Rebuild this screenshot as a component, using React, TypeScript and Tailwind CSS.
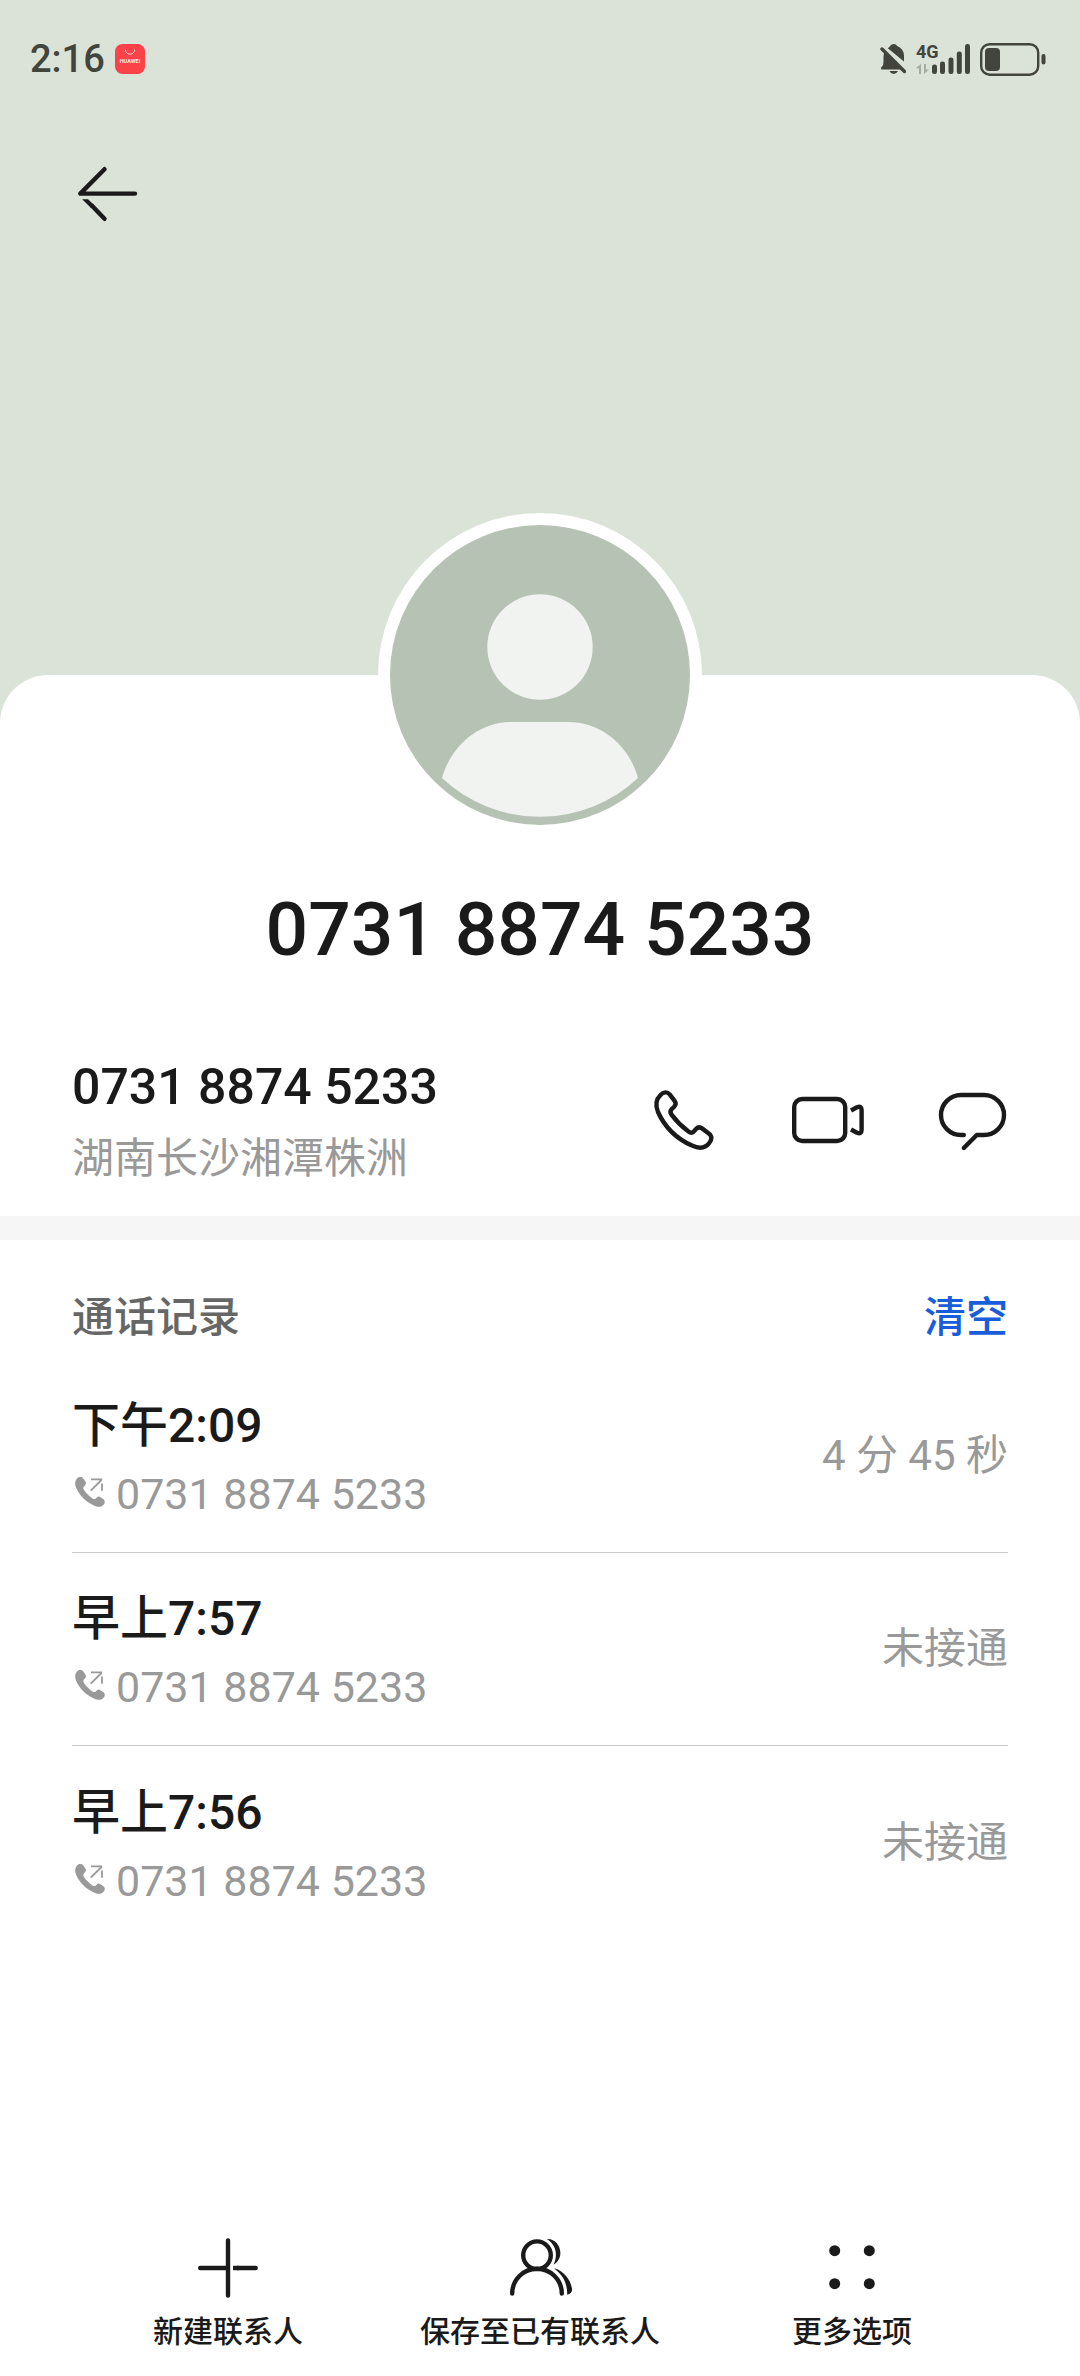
import type { ReactNode } from "react";

interface CallRecord {
  id: number;
  time: string;
  number: string;
  result: string;
}

const PHONE_NUMBER = "0731 8874 5233";

const CALLS: CallRecord[] = [
  { id: 1, time: "下午2:09", number: PHONE_NUMBER, result: "4 分 45 秒" },
  { id: 2, time: "早上7:57", number: PHONE_NUMBER, result: "未接通" },
  { id: 3, time: "早上7:56", number: PHONE_NUMBER, result: "未接通" },
];

interface IconProps {
  children: ReactNode;
}

// 72px line icon shared by the toolbar, contact actions and bottom bar
const LineIcon = ({ children }: IconProps) => (
  <svg
    viewBox="0 0 72 72"
    className="size-18"
    fill="none"
    stroke="currentColor"
    strokeWidth="4.4"
    strokeLinecap="round"
    strokeLinejoin="round"
    aria-hidden="true"
  >
    {children}
  </svg>
);

const BackIcon = () => (
  <LineIcon>
    <path d="M32.5 11.2L8.3 35.6H63" />
    <path d="M20 47.8L32.5 60.8" />
    <path d="M10.2 41.2H16L22 47L19 50Z" fill="currentColor" stroke="none" />
  </LineIcon>
);

const PhoneIcon = () => (
  <LineIcon>
    <path d="M12.5 11C15.5 7.6 19.3 7.6 21.7 10.4L26.6 16.8C28.2 19 28 20.9 26 23L23.6 25.2C22.1 26.7 22.2 28.7 23.5 30.6C28.5 37.3 33.5 42.3 40.5 47.6C42.4 49 44.3 49 45.8 47.4L48 45C49.8 43.1 52.2 43 54.4 44.6L60.8 49.4C64.2 52 64.2 55.8 61 59.4C57 64.4 51 64.8 44 61.6C28 54.5 16.5 42.5 10 28C7.5 22 8 15.5 12.5 11Z" />
  </LineIcon>
);

const VideoIcon = () => (
  <LineIcon>
    <rect x="2.2" y="15" width="51" height="42" rx="8" />
    <path d="M59 26.5L65 23.3Q69.6 21.5 69.6 26V46Q69.6 50.5 65 48.7L59 45.5" strokeLinecap="butt" />
  </LineIcon>
);

const MessageIcon = () => (
  <LineIcon>
    <path d="M27.8 51H25A20 20 0 0 1 25 11H48A20 20 0 0 1 48 51H40.8L27.8 64" />
  </LineIcon>
);

const PlusIcon = () => (
  <LineIcon>
    <path d="M36 8.5V63.5M8.2 36H35M63.7 36H45" />
    <path d="M47 36H41" strokeLinecap="butt" />
  </LineIcon>
);

const ContactsIcon = () => (
  <LineIcon>
    <circle cx="33" cy="23.2" r="13.8" />
    <path d="M8.2 61.5A24.8 24.8 0 0 1 57.8 61.5" />
    <path
      d="M43 7C51 6.600 56.500 13.500 56.400 21.300C56.200 26.500 53.500 30.500 49.600 32.600C51.600 28.500 52.200 24.500 51.800 20.500C51.200 14.500 47.500 10 43 7Z"
      fill="currentColor"
      stroke="none"
    />
    <path
      d="M50 36.300C60 38.500 67.500 49 68.100 58Q67.800 61.500 63.200 62.700C63.400 52 59.500 43.500 50 36.300Z"
      fill="currentColor"
      stroke="none"
    />
  </LineIcon>
);

const MoreIcon = () => (
  <LineIcon>
    <g fill="currentColor" stroke="none">
      <circle cx="18.7" cy="18.7" r="5.5" />
      <circle cx="53.3" cy="18.7" r="5.5" />
      <circle cx="18.7" cy="51.7" r="5.5" />
      <circle cx="53.3" cy="51.7" r="5.5" />
    </g>
  </LineIcon>
);

const OutgoingIcon = () => (
  <svg viewBox="0 0 36 36" className="mb-1 size-9" fill="currentColor" aria-hidden="true">
    <path d="M5 4.5C7 2.6 9.8 2.6 11.3 4.5L13.4 7.6C14.4 9.3 14 10.5 12.6 11.8C11 13.2 11 14.4 12 16C14.3 19.4 17 22.1 20.3 24.4C21.9 25.5 23 25.3 24.3 23.9C25.6 22.5 27 22.2 28.6 23.2L31.4 25.2C33.3 26.8 33.3 29.2 31.4 31C29 33.6 25.5 33 21.5 31.2C13.5 27.6 7.5 21.4 4.2 14C2.6 10.2 2.8 6.8 5 4.5Z" />
    <path d="M19 5.3H30.2M18.7 16.6L29.5 6M30 9.5V16.8" fill="none" stroke="currentColor" strokeWidth="1.8" />
  </svg>
);

const StatusBar = () => (
  <div className="flex h-[118px] items-center justify-between pr-[34px] pl-[30px] text-[#41453d]">
    <div className="flex items-center gap-2.5">
      <span className="text-[38px] leading-10 font-medium">2:16</span>
      <svg viewBox="0 0 30 30" className="size-[30px]" role="img" aria-label="HUAWEI">
        <rect width="30" height="30" rx="7.5" fill="#fb4248" />
        <path d="M10.3 5.5A4.7 4.7 0 0 0 19.7 5.5" fill="none" stroke="#ffd5d3" strokeWidth="1" />
        <text x="15" y="19" textAnchor="middle" fontSize="5.5" fontWeight="700" fill="#ffe9e6">
          HUAWEI
        </text>
      </svg>
    </div>
    <div className="flex items-center gap-2.5">
      <svg viewBox="0 0 26 30" className="h-[30px] w-[26px]" fill="currentColor" aria-hidden="true">
        <path d="M9.5 2.8Q11 0 13.5 0T17.3 2Q24 5 24 12V17.5L7.8 4.2Z" />
        <path d="M4.2 8.5L21.5 25.5H1.5Q0 24 2 22.5Q3.5 21 3.5 18V12Z" />
        <path d="M2 5L24.5 27.5" stroke="currentColor" strokeWidth="3.4" strokeLinecap="round" />
        <path d="M9.5 27H18Q16.5 30 13.7 30T9.5 27Z" />
      </svg>
      <svg viewBox="0 0 54 30" className="h-[30px] w-[54px] overflow-visible" fill="currentColor" aria-hidden="true">
        <text x="0" y="14" fontSize="18" fontWeight="700">
          4G
        </text>
        <path d="M0 24L5 20V30H3V24.5ZM8 20H10V25.5H13L8 30Z" opacity="0.35" />
        <rect x="16" y="20.5" width="5" height="9.5" rx="2.3" />
        <rect x="24" y="17.5" width="5" height="12.5" rx="2.3" />
        <rect x="32.5" y="13.5" width="5" height="16.5" rx="2.3" />
        <rect x="40.8" y="7.5" width="5" height="22.5" rx="2.3" />
        <rect x="49" y="0" width="5" height="30" rx="2.3" />
      </svg>
      <svg viewBox="0 0 66 33" className="h-[33px] w-[66px]" fill="currentColor" aria-hidden="true">
        <rect x="1.2" y="1.2" width="57" height="30.5" rx="8.5" fill="none" stroke="currentColor" strokeWidth="2.4" />
        <rect x="5" y="5" width="15" height="23" rx="4" />
        <rect x="61.5" y="11" width="4" height="10.5" rx="2" />
      </svg>
    </div>
  </div>
);

const Avatar = () => (
  <svg
    viewBox="0 0 324 324"
    className="mx-auto -mt-[162px] size-[324px]"
    role="img"
    aria-label="头像"
  >
    <circle cx="162" cy="162" r="162" fill="#fff" />
    <circle cx="162" cy="162" r="150" fill="#b6c2b3" />
    <circle cx="162" cy="134" r="52.7" fill="#f0f3f0" />
    <path d="M134 209H190C224 209 251 233 260 265A143 143 0 0 1 64 265C73 233 100 209 134 209Z" fill="#f0f3f0" />
  </svg>
);

const CallRow = ({ call }: { call: CallRecord }) => (
  <li className="flex h-[193px] items-center justify-between border-b border-[#ccc] last:border-b-0">
    <div className="pt-2">
      <p className="text-[48px] leading-[68px] font-medium">{call.time}</p>
      <p className="flex items-center gap-2 text-[43px] leading-[68px] text-[#999]">
        <OutgoingIcon />
        {call.number}
      </p>
    </div>
    <span className="text-[42px] leading-[60px] text-[#999]">{call.result}</span>
  </li>
);

interface BottomActionProps {
  icon: ReactNode;
  label: string;
}

const BottomAction = ({ icon, label }: BottomActionProps) => (
  <button type="button" className="flex flex-col items-center gap-2 whitespace-nowrap">
    {icon}
    <span className="text-[30px] leading-10 font-medium">{label}</span>
  </button>
);

const App = () => (
  <div className="flex min-h-screen flex-col bg-[#dbe2d7] font-[Roboto,'Noto_Sans_CJK_SC',sans-serif] text-[#1a1a1a]">
    <header className="pb-[445px]">
      <StatusBar />
      <button type="button" aria-label="返回" className="mt-10 ml-18 block">
        <BackIcon />
      </button>
    </header>

    <main className="flex flex-1 flex-col rounded-t-[48px] bg-white">
      <Avatar />
      <h1 className="mt-11 text-center text-[75px] leading-24 font-medium">{PHONE_NUMBER}</h1>

      <section className="mt-17 flex items-center justify-between border-b-24 border-[#f6f6f6] px-18 pb-[21px]">
        <div className="pt-1.5">
          <p className="text-[50px] leading-18 font-medium">{PHONE_NUMBER}</p>
          <p className="text-[42px] leading-18 text-[#999]">湖南长沙湘潭株洲</p>
        </div>
        <div className="flex gap-18">
          <button type="button" aria-label="拨打电话">
            <PhoneIcon />
          </button>
          <button type="button" aria-label="视频通话">
            <VideoIcon />
          </button>
          <button type="button" aria-label="发送信息">
            <MessageIcon />
          </button>
        </div>
      </section>

      <section className="px-18 pt-[46px]">
        <div className="flex items-center justify-between text-[42px] leading-16 font-medium">
          <h2 className="text-[#666]">通话记录</h2>
          <button type="button" className="text-[#1a5ddb]">
            清空
          </button>
        </div>
        <ul className="mt-2.5">
          {CALLS.map((call) => (
            <CallRow key={call.id} call={call} />
          ))}
        </ul>
      </section>

      <nav className="mt-auto grid grid-cols-3 px-18 pb-6">
        <BottomAction icon={<PlusIcon />} label="新建联系人" />
        <BottomAction icon={<ContactsIcon />} label="保存至已有联系人" />
        <BottomAction icon={<MoreIcon />} label="更多选项" />
      </nav>
    </main>
  </div>
);

export default App;
